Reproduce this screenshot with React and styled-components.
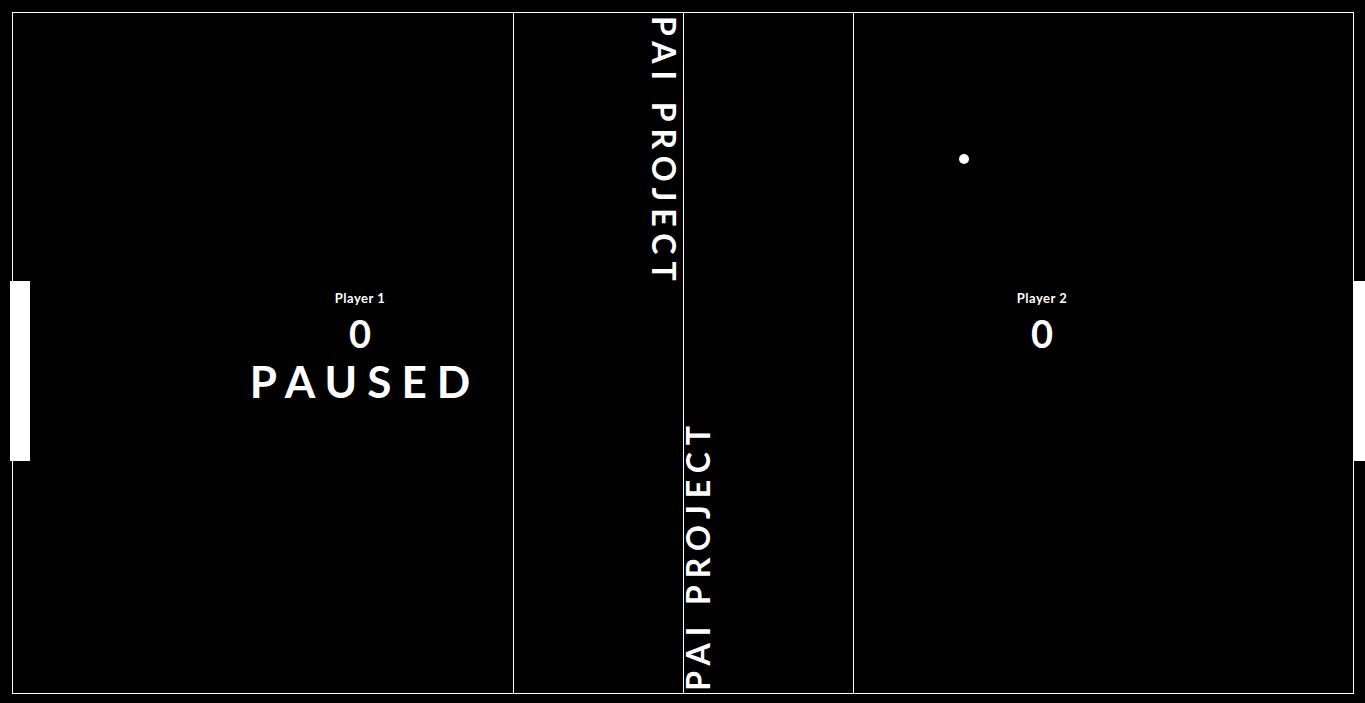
import React from 'react';
import styled, { createGlobalStyle } from 'styled-components';

const GlobalStyle = createGlobalStyle`
  body {
    margin: 0;
    background-color: #000;
    color: #fff;
    font-family: Lato, "Open Sans", sans-serif;
    overflow: hidden;
  }
`;

const Page = styled.div`
  padding: 12px;
`;

const Board = styled.div`
  position: relative;
  display: flex;
  width: 1340px;
  height: 680px;
  border: 1px solid #fff;
`;

const Half = styled.div`
  display: flex;
  justify-content: ${({ side }) => (side === 'left' ? 'flex-end' : 'flex-start')};
  width: ${({ w }) => w}px;
  padding: ${({ side }) => (side === 'left' ? '0 33px 0 0' : '0 0 0 68px')};
  box-sizing: border-box;
  border-right: ${({ side }) => (side === 'left' ? '1px solid #fff' : 'none')};
`;

const NetColumn = styled.div`
  display: flex;
  justify-content: ${({ flip }) => (flip ? 'flex-start' : 'flex-end')};
  align-items: ${({ flip }) => (flip ? 'flex-end' : 'flex-start')};
  width: 170px;
  box-sizing: border-box;
  padding: ${({ flip }) => (flip ? '0 0 2px 0' : '3px 5px 0 0')};
  border-right: 1px solid #fff;
`;

const VerticalTitle = styled.div`
  writing-mode: vertical-rl;
  transform: ${({ flip }) => (flip ? 'rotate(180deg)' : 'none')};
  font-size: 32px;
  font-weight: 700;
  line-height: 28px;
  letter-spacing: 7px;
  white-space: nowrap;
`;

const ScoreBox = styled.div`
  display: flex;
  flex-direction: column;
  align-items: center;
  width: 240px;
  padding-top: 277px;
`;

const PlayerLabel = styled.div`
  font-size: 13px;
  line-height: 16px;
  font-weight: 700;
  letter-spacing: 0.5px;
`;

const Score = styled.div`
  margin-top: 9px;
  font-size: 38px;
  font-weight: 700;
  line-height: 36px;
`;

const Status = styled.div`
  margin-top: 9px;
  font-size: 44px;
  font-weight: 700;
  line-height: 43px;
  letter-spacing: 10px;
  padding-left: 10px;
`;

const Paddle = styled.div`
  position: absolute;
  top: 268px;
  left: ${({ x }) => x}px;
  width: 20px;
  height: 180px;
  background: #fff;
`;

const Ball = styled.div`
  position: absolute;
  left: 946px;
  top: 141px;
  width: 10px;
  height: 10px;
  border-radius: 50%;
  background: #fff;
`;

const App = () => (
  <>
    <GlobalStyle />
    <Page>
      <Board>
        <Half side="left" w={501}>
          <ScoreBox>
            <PlayerLabel>Player 1</PlayerLabel>
            <Score>0</Score>
            <Status>PAUSED</Status>
          </ScoreBox>
        </Half>
        <NetColumn>
          <VerticalTitle>PAI PROJECT</VerticalTitle>
        </NetColumn>
        <NetColumn flip>
          <VerticalTitle flip>PAI PROJECT</VerticalTitle>
        </NetColumn>
        <Half side="right" w={499}>
          <ScoreBox>
            <PlayerLabel>Player 2</PlayerLabel>
            <Score>0</Score>
          </ScoreBox>
        </Half>
        <Paddle x={-3} />
        <Paddle x={1340} />
        <Ball />
      </Board>
    </Page>
  </>
);

export default App;
